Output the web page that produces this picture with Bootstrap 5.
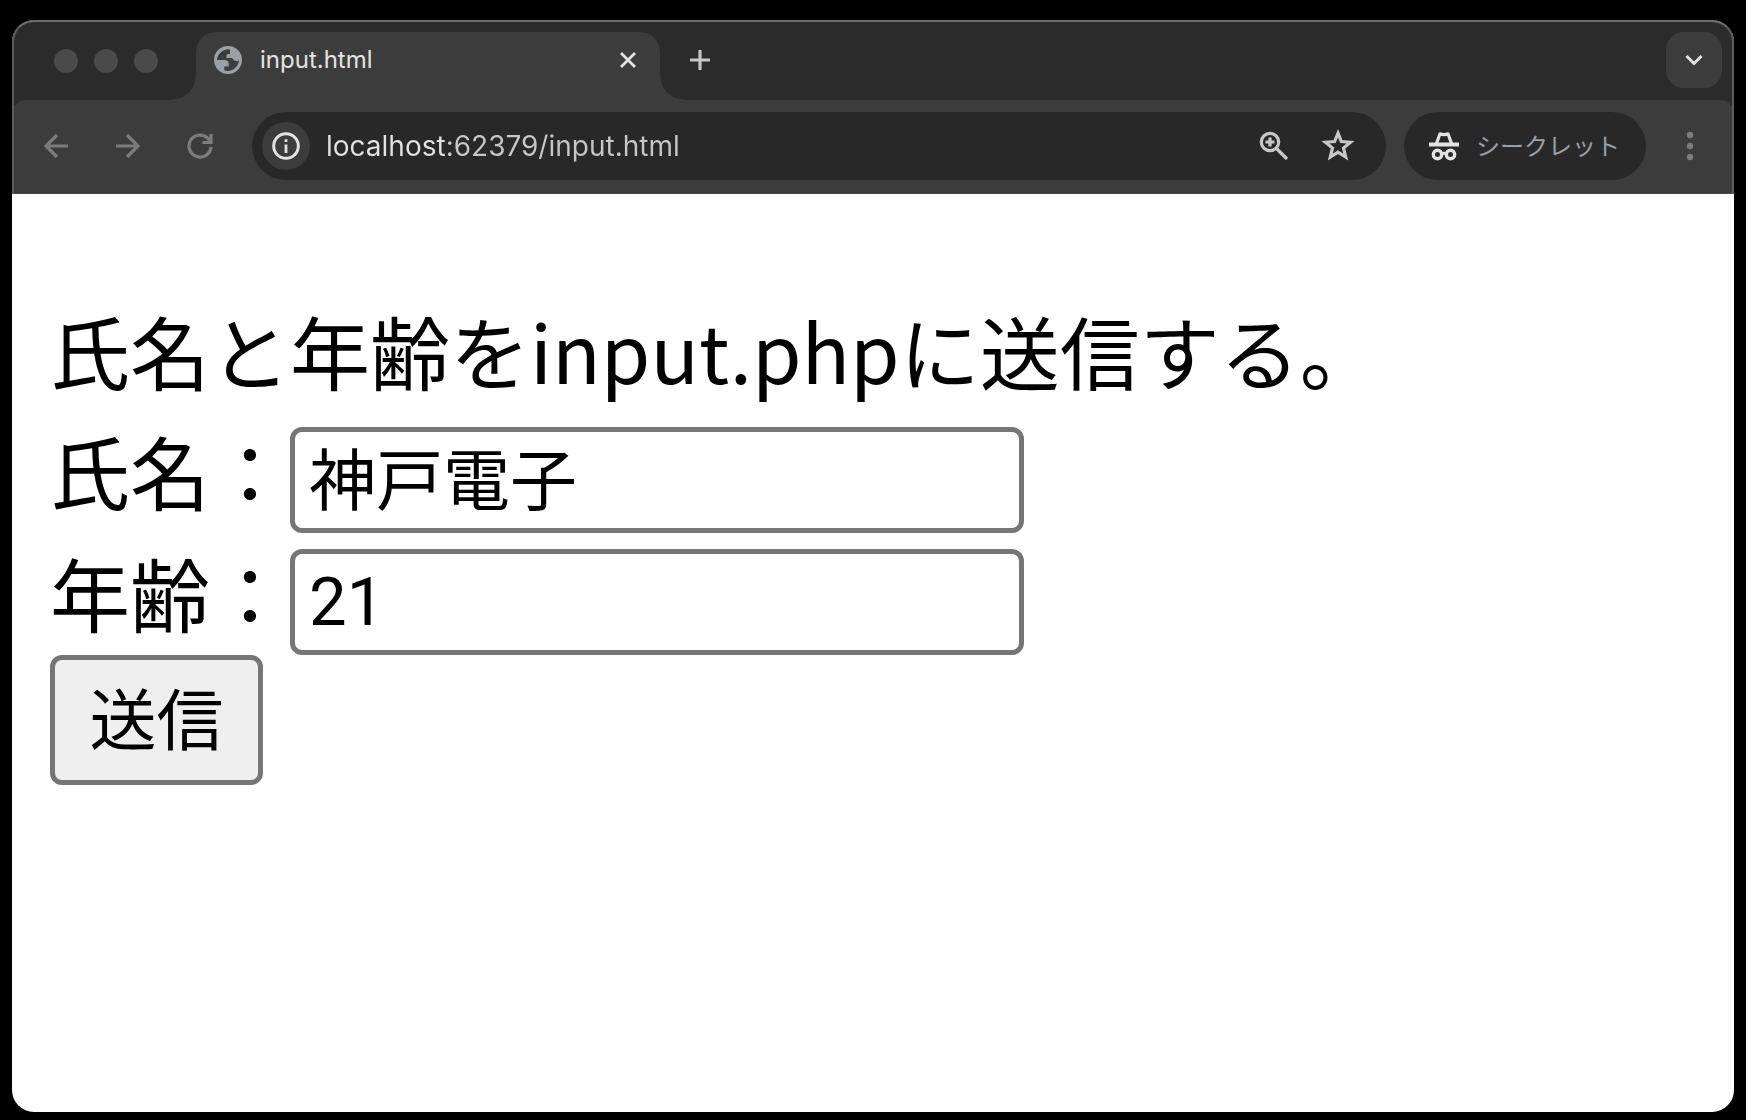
<!DOCTYPE html>
<html lang="ja">
<head>
<meta charset="utf-8">
<meta name="viewport" content="width=device-width, initial-scale=1">
<title>input.html</title>
<link href="https://cdn.jsdelivr.net/npm/bootstrap@5.3.0/dist/css/bootstrap.min.css" rel="stylesheet">
<style>
  body { background: #000; padding: 20px 12px 8px; font-family: Inter, "Noto Sans CJK JP", sans-serif; }
  .browser { border-radius: 22px; overflow: hidden; background: #fff; }
  .chrome-top { background: #2b2b2b; }
  /* thin light edge round the dark part of the window */
  .chrome-top::after { content: ""; position: absolute; inset: 0; border: 2px solid #5c5c5c; border-top-color: #6e6e6e; border-bottom: 0; border-radius: 22px 22px 0 0; pointer-events: none; }
  .tab-strip { height: 80px; padding: 12px 12px 0 42px; }
  .lights { gap: 16px; width: 142px; height: 58px; }
  .lights span { width: 24px; height: 24px; border-radius: 50%; background: #4a4a4a; }
  .page-tab { width: 464px; height: 68px; background: #3c3c3c; border-radius: 20px 20px 0 0; padding: 0 20px 12px 18px; color: #e3e3e3; font-size: 24px; line-height: 32px; }
  .page-tab::before, .page-tab::after { content: ""; position: absolute; bottom: 0; width: 24px; height: 24px; }
  .page-tab::before { right: 100%; background: radial-gradient(circle at 0 0, transparent 23px, #3c3c3c 24px); }
  .page-tab::after { left: 100%; background: radial-gradient(circle at 100% 0, transparent 23px, #3c3c3c 24px); }
  .tab-name { margin-left: 18px; }
  .bare { border: 0; background: none; padding: 0; display: flex; align-items: center; justify-content: center; flex: none; }
  .bare svg, .page-tab svg, .secret svg { display: block; flex: none; }
  .close-tab { width: 24px; height: 32px; color: #e3e3e3; }
  .new-tab { width: 56px; height: 56px; margin-left: 12px; color: #c7c7c7; }
  .tab-search { width: 56px; height: 56px; border-radius: 18px; background: #3c3c3c; color: #e3e3e3; }
  .toolbar { background: #3c3c3c; border-radius: 14px 14px 0 0; border-bottom: 1px solid #4a484a; padding: 12px 16px 13px; color: #7c7c7c; }
  .nav-btn { width: 56px; height: 56px; color: #7c7c7c; margin-right: 16px; }
  .omnibox { background: #282828; height: 68px; border-radius: 34px; margin-left: 8px; padding: 0 24px 0 10px; }
  .site-info { width: 48px; height: 48px; border-radius: 50%; background: #3c3c3c; color: #e3e3e3; }
  .address { border: 0; outline: 0; padding: 0 0 0 16px; min-width: 0; font-size: 28px; line-height: 40px; color: transparent; background: linear-gradient(90deg, #e3e3e3 136px, #c7c7c7 136px); -webkit-background-clip: text; background-clip: text; }
  .box-btn { width: 48px; height: 48px; color: #c7c7c7; }
  .secret { background: #282828; height: 68px; border-radius: 34px; margin-left: 18px; padding: 0 28px 0 24px; color: #9aa0a6; font-size: 24px; line-height: 32px; width: 242px; gap: 16px; }
  .secret span { padding-top: 2px; }
  .menu-btn { width: 56px; height: 56px; margin-left: 16px; color: #7c7c7c; }
  .page-body { padding: 95px 38px 38px; color: #000; font-family: "Noto Sans CJK JP", sans-serif; font-size: 80px; line-height: 120px; }
  .page-body p { margin-bottom: 18px; }
  .rows { gap: 16px; }
  .field-label { line-height: 84px; padding-bottom: 22px; width: 240px; flex: none; }
  .field { width: 734px; height: 106px; border: 5px solid #767676; border-radius: 12px; padding: 0 14px; background: #fff; color: #000; font-size: 67px; line-height: 96px; font-family: Roboto, "Noto Sans CJK JP", sans-serif; min-width: 0; }
  .kanji-field { padding-bottom: 10px; font-family: "Noto Sans CJK JP", sans-serif; }
  .send { width: 213px; height: 130px; border: 5px solid #767676; border-radius: 12px; background: #efefef; color: #000; font-size: 67px; line-height: 96px; padding: 0 0 8px; font-family: "Noto Sans CJK JP", sans-serif; display: block; }
</style>
<script src="https://cdn.jsdelivr.net/npm/bootstrap@5.3.0/dist/js/bootstrap.bundle.min.js"></script>
</head>
<body class="min-vh-100 d-flex flex-column">
<div class="browser flex-grow-1 d-flex flex-column">
  <header class="chrome-top position-relative">
    <div class="tab-strip d-flex align-items-start">
      <div class="lights d-flex align-items-center"><span></span><span></span><span></span></div>
      <div class="page-tab position-relative d-flex align-items-center">
        <svg width="28" height="28" viewBox="0 0 28 28"><circle cx="14" cy="14" r="14" fill="#9aa0a6"/><path fill="#3c3c3c" d="M15.500 3.200C9.500 2.700 4.200 7.200 3.100 12.500L3 14H10.500C13 14 14.800 15.500 14.800 18V20.500H10.300V24.500C17 26.500 24.500 21.500 25 14.200C23.500 15.300 22 15.500 20.500 14.500C18.800 13.300 18.700 12.100 16.500 12.100H12.500V9.500C12.500 8.400 13.200 7.900 14.200 7.900H16V5.600C16 4.600 15.900 4 15.500 3.200Z"/></svg>
        <span class="tab-name flex-grow-1">input.html</span>
        <button class="bare close-tab" type="button" aria-label="閉じる"><svg width="16" height="16" viewBox="0 0 16 16"><path d="M1 1L15 15M15 1L1 15" stroke="currentColor" stroke-width="2.800"/></svg></button>
      </div>
      <button class="bare new-tab" type="button" aria-label="新しいタブ"><svg width="20" height="20" viewBox="0 0 20 20"><path d="M10 0V20M0 10H20" stroke="currentColor" stroke-width="3.200"/></svg></button>
      <button class="bare tab-search ms-auto" type="button" aria-label="タブを検索"><svg width="18" height="12" viewBox="0 0 18 12"><path d="M1.500 2L9 9.500L16.500 2" fill="none" stroke="currentColor" stroke-width="3"/></svg></button>
    </div>
    <div class="toolbar d-flex align-items-center">
      <button class="bare nav-btn" type="button" aria-label="戻る"><svg width="26" height="26" viewBox="0 0 26 26"><path d="M25 13H3M14 2L3 13L14 24" fill="none" stroke="currentColor" stroke-width="3.200"/></svg></button>
      <button class="bare nav-btn" type="button" aria-label="進む"><svg width="26" height="26" viewBox="0 0 26 26"><path d="M1 13H23M12 2L23 13L12 24" fill="none" stroke="currentColor" stroke-width="3.200"/></svg></button>
      <button class="bare nav-btn" type="button" aria-label="再読み込み"><svg width="26" height="26" viewBox="0 0 26 26"><path d="M24 14A11 11 0 1 1 21.500 6L24 9.500M24 1V9.500H15.500" fill="none" stroke="currentColor" stroke-width="3.200"/></svg></button>
      <div class="omnibox d-flex align-items-center flex-grow-1">
        <button class="bare site-info" type="button" aria-label="サイト情報"><svg width="28" height="28" viewBox="0 0 28 28"><circle cx="14" cy="14" r="12.300" fill="none" stroke="currentColor" stroke-width="3"/><path d="M14 12.500V21M14 7.200V10" stroke="currentColor" stroke-width="2.800"/></svg></button>
        <input class="address flex-grow-1" type="text" aria-label="アドレス" value="localhost:62379/input.html" spellcheck="false">
        <button class="bare box-btn me-3" type="button" aria-label="ズーム"><svg width="30" height="30" viewBox="0 0 30 30"><circle cx="11" cy="11" r="8.700" fill="none" stroke="currentColor" stroke-width="3.200"/><path d="M17 17L28 28M11 6.500V15.500M6.500 11H15.500" stroke="currentColor" stroke-width="3.200"/></svg></button>
        <button class="bare box-btn" type="button" aria-label="ブックマーク"><svg width="34" height="34" viewBox="0 0 34 34"><path d="M17 4.200L20.400 12.500L29.500 13.200L22.500 19L24.700 28L17 23.200L9.300 28L11.500 19L4.500 13.200L13.600 12.500Z" fill="none" stroke="currentColor" stroke-width="3.200"/></svg></button>
      </div>
      <div class="secret d-flex align-items-center">
        <svg width="32" height="30" viewBox="0 0 32 30" fill="none" stroke="#e3e3e3"><path d="M1 13.500H31" stroke-width="3.800"/><path d="M8.500 12.500L12 2.800Q14 3.600 16 3.600T20 2.800L23.500 12.500" stroke-width="3.200" stroke-linejoin="round"/><circle cx="9.500" cy="23.500" r="4.200" stroke-width="3.400"/><circle cx="22.500" cy="23.500" r="4.200" stroke-width="3.400"/><path d="M13 23Q16 21.500 19 23" stroke-width="3"/></svg>
        <span class="text-nowrap">シークレット</span>
      </div>
      <button class="bare menu-btn" type="button" aria-label="メニュー"><svg width="8" height="30" viewBox="0 0 8 30" fill="currentColor"><circle cx="4" cy="4" r="3.200"/><circle cx="4" cy="15" r="3.200"/><circle cx="4" cy="26" r="3.200"/></svg></button>
    </div>
  </header>
  <main class="page-body flex-grow-1">
    <p>氏名と年齢をinput.phpに送信する。</p>
    <form action="input.php" method="post">
      <div class="rows d-flex flex-column">
        <div class="d-flex"><label class="field-label" for="fullname">氏名：</label><input class="field kanji-field" id="fullname" name="name" type="text" value="神戸電子"></div>
        <div class="d-flex"><label class="field-label" for="years">年齢：</label><input class="field" id="years" name="age" type="text" value="21"></div>
      </div>
      <button class="send" type="submit">送信</button>
    </form>
  </main>
</div>
</body>
</html>
